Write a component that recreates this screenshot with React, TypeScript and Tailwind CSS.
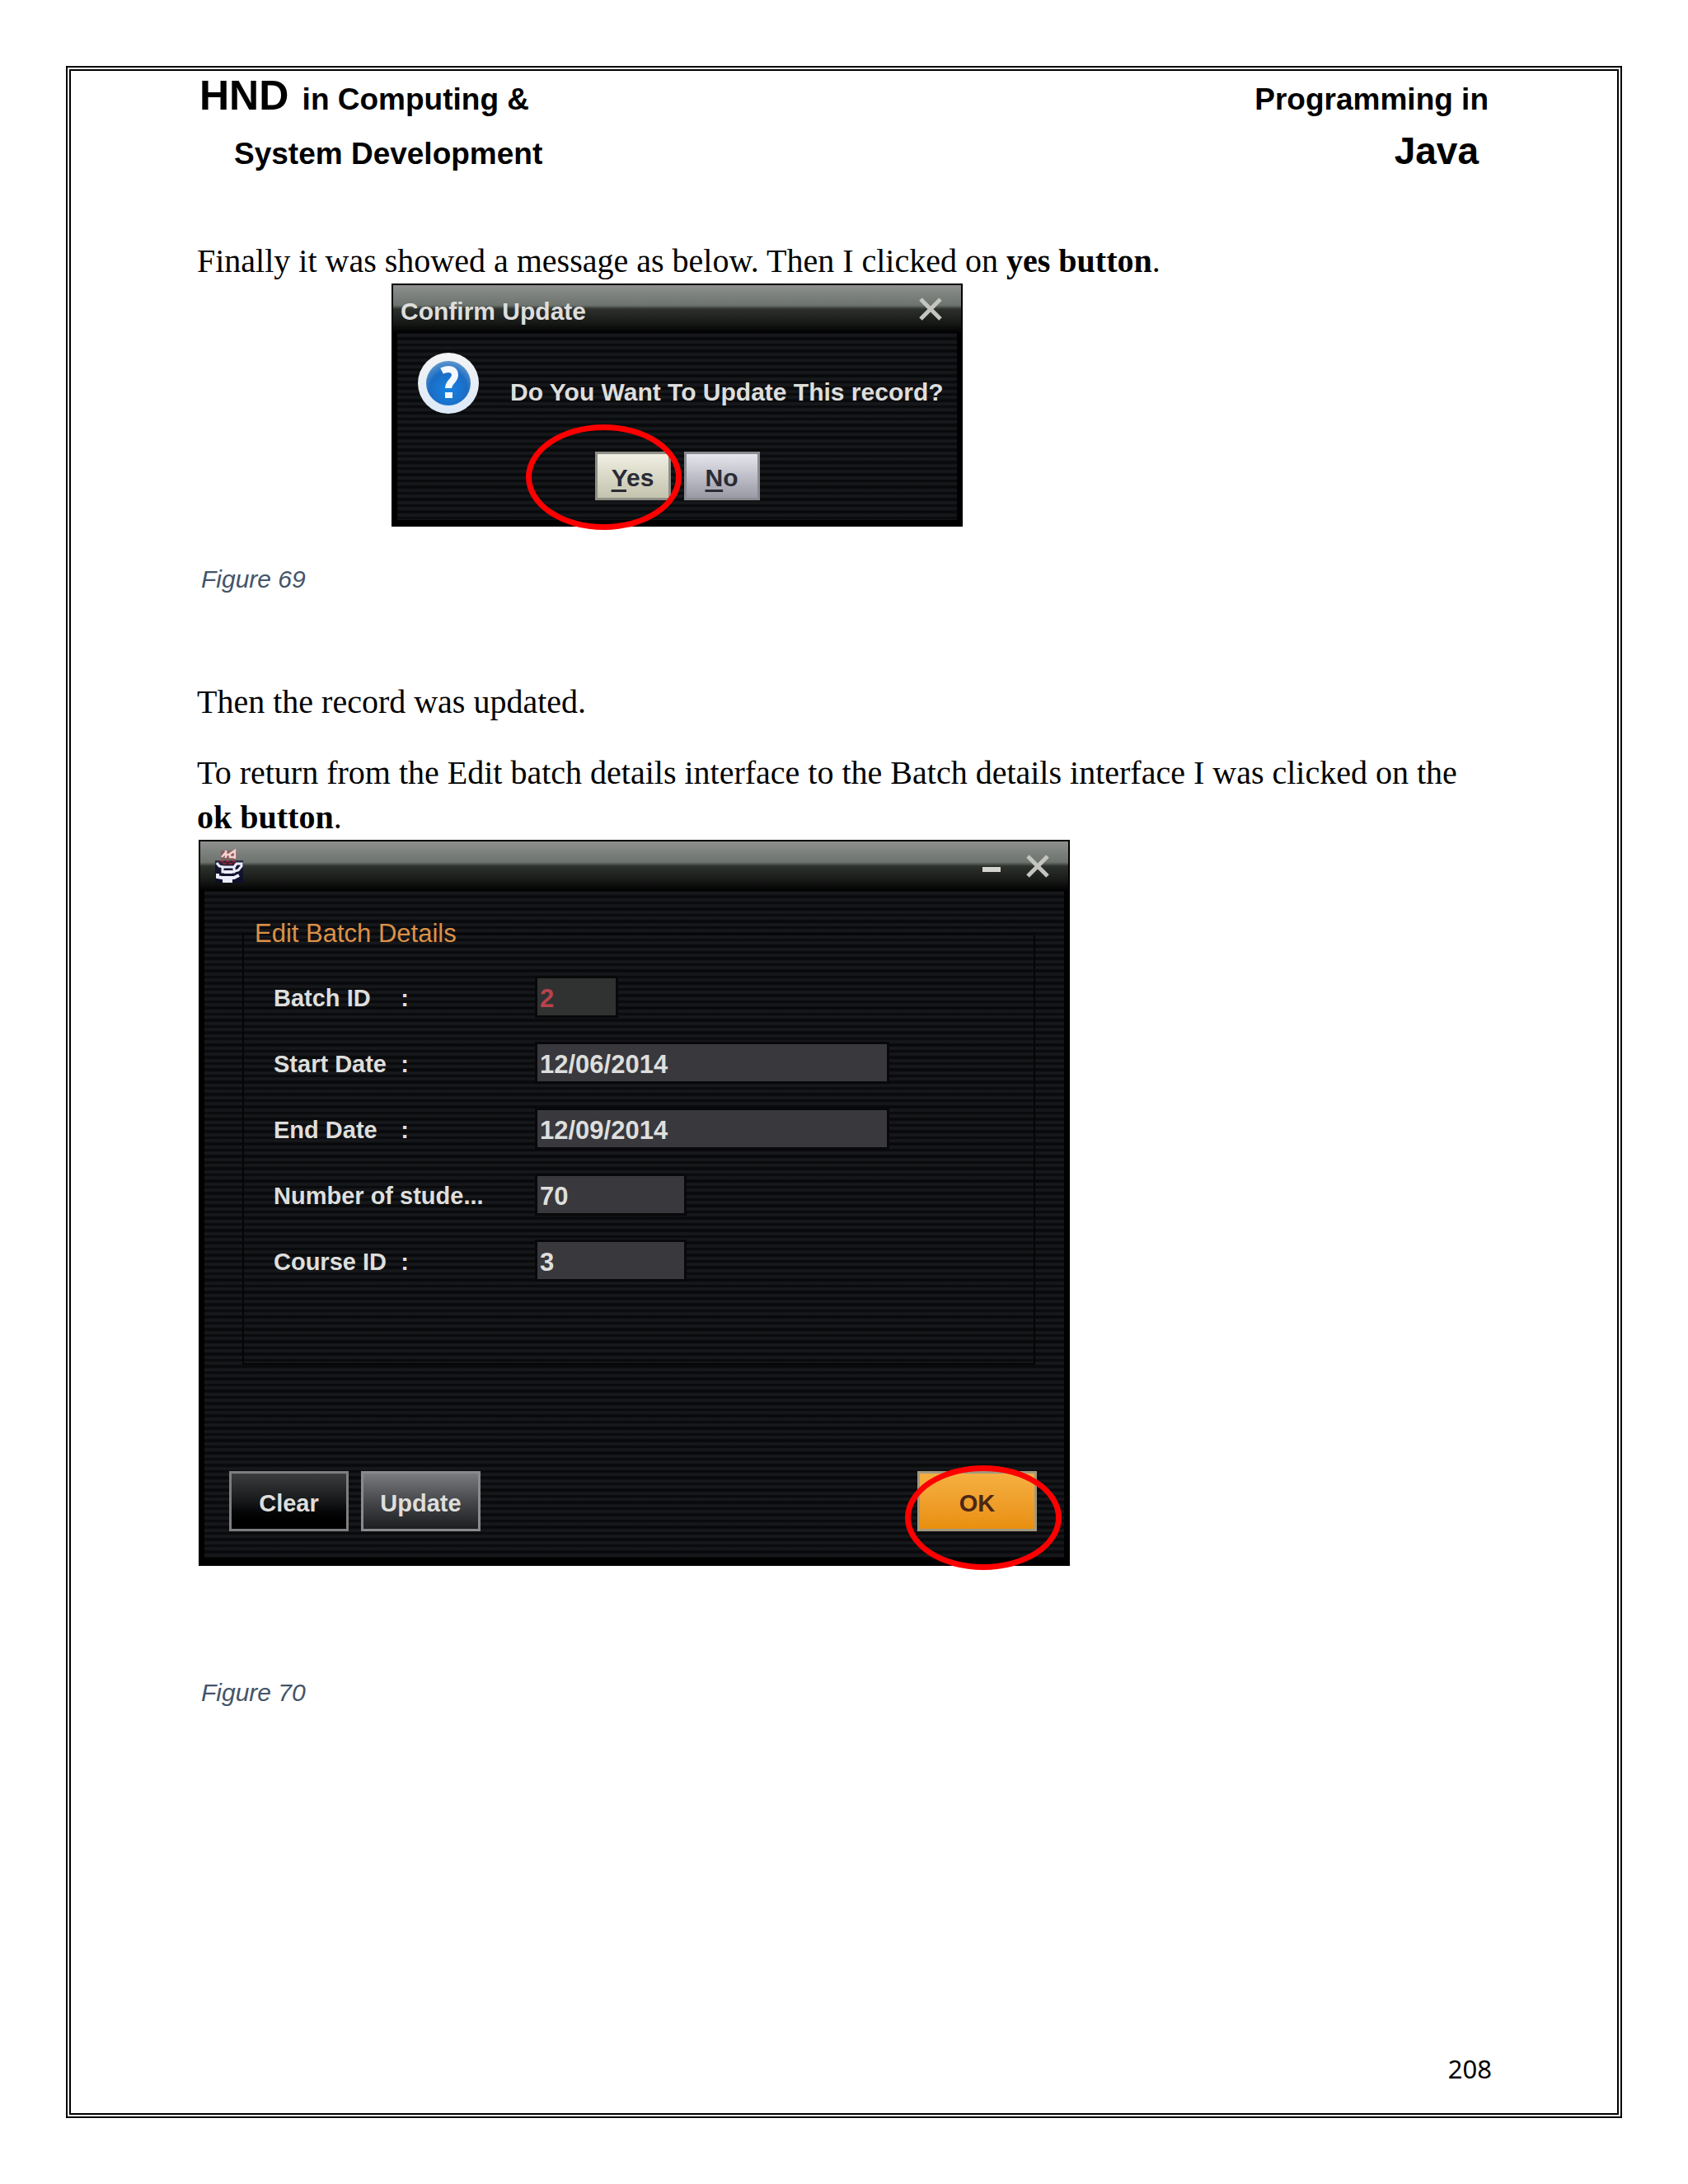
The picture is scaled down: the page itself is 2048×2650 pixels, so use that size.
import type { ReactNode } from "react";

const stripes =
  "bg-[repeating-linear-gradient(to_bottom,#08090b_0px,#17181b_2px,#17181b_4px,#08090b_6px,#08090b_8px,#17181b_10px,#17181b_12px,#08090b_14px,#08090b_15px)]";
const chrome =
  "bg-[linear-gradient(to_bottom,#8e908e_0%,#6d736e_42%,#2d312d_50%,#161816_80%,#000000_100%)]";

function Ring({ className }: { className: string }) {
  return (
    <span
      aria-hidden="true"
      className={`pointer-events-none absolute rounded-[50%] border-[7px] border-[#ff0000] ${className}`}
    />
  );
}

function CloseIcon() {
  return (
    <svg width="30" height="28" viewBox="0 0 30 28" fill="none" stroke="#c4c4c0" strokeWidth="5">
      <path d="M3 2 L27 26 M27 2 L3 26" />
    </svg>
  );
}

function QuestionIcon() {
  return (
    <svg width="74" height="74" viewBox="0 0 74 74" className="shrink-0">
      <defs>
        <linearGradient id="ring" x1="0" y1="0" x2="0" y2="1">
          <stop offset="0" stopColor="#f4f4f4" />
          <stop offset="1" stopColor="#dce9f8" />
        </linearGradient>
        <radialGradient id="ball" cx="0.5" cy="0.65" r="0.65">
          <stop offset="0" stopColor="#1784e4" />
          <stop offset="0.65" stopColor="#1b6cc4" />
          <stop offset="1" stopColor="#5f98cc" />
        </radialGradient>
      </defs>
      <circle cx="37" cy="37" r="37" fill="url(#ring)" />
      <circle cx="37" cy="37" r="27" fill="url(#ball)" />
      <path d="M29 22 C37 18 45 20 45 27 C45 34 37 35 37 43" fill="none" stroke="#f4f9ff" strokeWidth="8" />
      <rect x="33" y="48" width="9" height="7" fill="#f4f9ff" />
    </svg>
  );
}

function JavaIcon() {
  return (
    <svg width="38" height="44" viewBox="0 0 38 44" fill="none">
      <rect x="0" y="15" width="34" height="27" fill="#0b0b30" opacity="0.7" />
      <path d="M7 3 H26 V14 H7 Z" fill="#8c4a4e" opacity="0.6" />
      <path d="M8 11 L14 4 M13 3 V12 M13 8 H18 M18 12 L18 7 L24 3 V13 M18 11 H24" stroke="#f6cfcf" strokeWidth="2.5" />
      <path d="M6 16 H27 M9 19 H24" stroke="#8e2030" strokeWidth="2" strokeDasharray="5 2" />
      <path d="M2 18 L5 22 L10 23 H23 L26 19 H32 V22 L28 27 L23 28" stroke="#ececfb" strokeWidth="3" />
      <path d="M9 22 V29 H23 V22" stroke="#ececfb" strokeWidth="3" />
      <path d="M11 27 H21 V31 H11 Z" fill="#ececfb" />
      <path d="M3 31 V35 L8 36 H23 L29 33 M9 40 H21" stroke="#ececfb" strokeWidth="4" />
    </svg>
  );
}

function Field({ label, value, colon = true, width, tone }: { label: string; value: string; colon?: boolean; width: string; tone: string }) {
  const id = label.toLowerCase().replace(/[^a-z]+/g, "-");
  return (
    <div className="flex h-[45px] items-center">
      <div className="w-[320px] shrink-0">
        <label htmlFor={id} className={`flex justify-between pt-0.5 whitespace-nowrap ${colon ? "w-[164px]" : "w-[270px]"}`}>
          <span>{label}</span>
          {colon && <span>:</span>}
        </label>
      </div>
      <input
        id={id}
        type="text"
        defaultValue={value}
        className={`h-[45px] pt-1 pl-[3px] text-[31px] font-bold shadow-[0_0_0_3px_#08080a] outline-none ${width} ${tone}`}
      />
    </div>
  );
}

function Caption({ children, className }: { children: ReactNode; className: string }) {
  return (
    <figcaption className={`pl-[5px] font-['Liberation_Sans',sans-serif] text-[30px] leading-9 text-[#44546a] italic ${className}`}>
      {children}
    </figcaption>
  );
}

export default function App() {
  return (
    <div className="flex min-h-screen bg-white p-20 text-black">
      <div className="flex w-full flex-col border-6 border-double border-black pr-[156px] pb-[34px] pl-[153px]">
        <header className="flex justify-between pt-0.5 font-['Liberation_Sans',sans-serif] text-[37px] leading-[66px] font-bold">
          <div className="pl-[3px]">
            <p>
              <span className="mr-1.5 text-[50px] leading-none">HND</span> in Computing &amp;
            </p>
            <p className="pl-[42px]">System Development</p>
          </div>
          <div className="text-right">
            <p>Programming in</p>
            <p className="pr-3">
              <span className="text-[46px] leading-none">Java</span>
            </p>
          </div>
        </header>

        <main className="font-['Liberation_Serif',serif] text-[40px] leading-[54px]">
          <p className="mt-[70px]">
            Finally it was showed a message as below. Then I clicked on <b>yes button</b>.
          </p>

          <figure>
            <section
              aria-label="Confirm Update"
              className="ml-[236px] w-[693px] max-w-full border-2 border-black bg-black font-['Liberation_Sans',sans-serif] text-[30px] leading-10 font-bold text-[#dededc]"
            >
              <div className={`flex h-[58px] items-center justify-between pr-[22px] pl-[9px] ${chrome}`}>
                <h2 className="pt-1.5">Confirm Update</h2>
                <button type="button" aria-label="Close">
                  <CloseIcon />
                </button>
              </div>
              <div className={`mx-[5px] mb-1.5 pt-6 pb-6 ${stripes}`}>
                <div className="flex items-start pl-[25px]">
                  <QuestionIcon />
                  <p className="mt-7 ml-[38px] whitespace-nowrap">Do You Want To Update This record?</p>
                </div>
                <div className="mt-[46px] flex justify-center gap-4 text-[#2a2c36]">
                  <div className="relative">
                    <button
                      type="button"
                      className="h-[59px] w-[92px] border-3 border-[#8f8f88] bg-linear-to-b from-[#f0efe2] to-[#c4c3ae] pt-1"
                    >
                      <u className="underline-offset-4">Y</u>es
                    </button>
                    <Ring className="-top-[33px] -left-[84px] h-[128px] w-[189px]" />
                  </div>
                  <button
                    type="button"
                    className="h-[59px] w-[92px] border-3 border-[#8a8a90] bg-linear-to-b from-[#e6e6ee] to-[#9a9aa6] pt-1"
                  >
                    <u className="underline-offset-4">N</u>o
                  </button>
                </div>
              </div>
            </section>
            <Caption className="mt-[46px]">Figure 69</Caption>
          </figure>

          <p className="mt-26">Then the record was updated.</p>
          <p className="mt-8">
            To return from the Edit batch details interface to the Batch details interface I was clicked on the{" "}
            <b className="whitespace-nowrap">ok button</b>.
          </p>

          <figure>
            <form
              aria-label="Edit Batch Details"
              onSubmit={(event) => event.preventDefault()}
              className="ml-0.5 w-[1057px] max-w-full border-2 border-black bg-black font-['Liberation_Sans',sans-serif] text-[29px] leading-9 font-bold text-[#dededc]"
            >
              <div className={`flex h-[60px] items-center justify-between pr-[22px] pl-[18px] ${chrome}`}>
                <JavaIcon />
                <div className="flex items-center gap-[30px]">
                  <button type="button" aria-label="Minimise" className="mt-2 h-1.5 w-[22px] bg-[#d4d4d0]" />
                  <button type="button" aria-label="Close">
                    <CloseIcon />
                  </button>
                </div>
              </div>
              <div className={`mx-[5px] mb-2 pt-[34px] pr-[33px] pb-8 pl-[30px] ${stripes}`}>
                <fieldset className="mr-0.5 ml-4 border-2 border-[#050507] pt-9 pr-4 pb-[102px] pl-[36px]">
                  <legend className="-ml-[25px] px-0.5 text-[31px] font-normal text-[#dc9148]">Edit Batch Details</legend>
                  <div className="flex flex-col gap-[35px]">
                    <Field label="Batch ID" value="2" width="w-[95px]" tone="bg-[#303232] text-[#b8434b]" />
                    <Field label="Start Date" value="12/06/2014" width="w-[424px]" tone="bg-[#38383d]" />
                    <Field label="End Date" value="12/09/2014" width="w-[424px]" tone="bg-[#38383d]" />
                    <Field label="Number of stude..." value="70" colon={false} width="w-[178px]" tone="bg-[#38383d]" />
                    <Field label="Course ID" value="3" width="w-[178px]" tone="bg-[#38383d]" />
                  </div>
                </fieldset>
                <div className="mt-[129px] flex gap-[15px]">
                  <button
                    type="button"
                    className="h-[73px] w-[145px] border-3 border-[#7e7e80] bg-linear-to-b from-[#3c3d3f] via-[#16181a] to-black pt-1"
                  >
                    Clear
                  </button>
                  <button
                    type="button"
                    className="h-[73px] w-[145px] border-3 border-[#8a8a8c] bg-linear-to-b from-[#7a7b7e] via-[#47484b] to-[#1e1f21] pt-1"
                  >
                    Update
                  </button>
                  <div className="relative ml-auto">
                    <button
                      type="submit"
                      className="h-[73px] w-[145px] border-3 border-[#a39a80] bg-linear-to-b from-[#f5b040] to-[#e98f0c] pt-1 text-[#4a2716]"
                    >
                      OK
                    </button>
                    <Ring className="-top-[7px] -left-[15px] h-[127px] w-[190px]" />
                  </div>
                </div>
              </div>
            </form>
            <Caption className="mt-34">Figure 70</Caption>
          </figure>
        </main>

        <footer className="-mr-1 mt-auto text-right font-['Noto_Sans',sans-serif] text-[31px] leading-10">208</footer>
      </div>
    </div>
  );
}
